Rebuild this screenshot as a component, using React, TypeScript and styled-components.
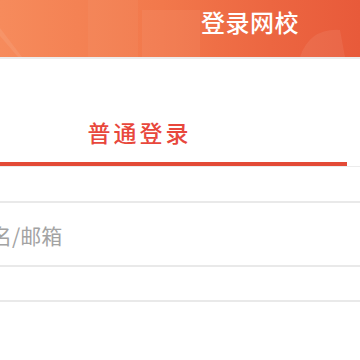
import styled, { createGlobalStyle } from "styled-components";

const GlobalStyle = createGlobalStyle`
  html, body {
    margin: 0;
    padding: 0;
    background: #ffffff;
    overflow: hidden;
  }
  body {
    font-family: "Noto Sans CJK SC", "Noto Sans", sans-serif;
  }
`;

const Page = styled.div`
  width: 360px;
  height: 360px;
  overflow: hidden;
  background: #ffffff;
`;

const Header = styled.header`
  position: relative;
  height: 57px;
  display: flex;
  align-items: center;
  justify-content: flex-end;
  padding-right: 61px;
  background: linear-gradient(90deg, #f68b5c 0%, #f2784b 45%, #ec6641 75%, #e85a3a 100%);
  border-bottom: 2px solid #ececec;
  overflow: hidden;
`;

const Decor = styled.svg`
  position: absolute;
  inset: 0;
  pointer-events: none;
`;

const Title = styled.h1`
  position: relative;
  margin: 0;
  color: #ffffff;
  font-size: 24px;
  font-weight: 500;
  line-height: 1;
  letter-spacing: 0.5px;
  padding-bottom: 14px;
`;

const TabBar = styled.div`
  display: flex;
  margin-left: -68px;
  margin-top: 50px;
  border-bottom: 1px solid #ececec;
`;

const Tab = styled.div<{ $active?: boolean }>`
  width: ${(p) => (p.$active ? "415px" : "120px")};
  flex-shrink: 0;
  height: 57px;
  display: flex;
  align-items: flex-start;
  justify-content: center;
  font-size: 23px;
  font-weight: 500;
  letter-spacing: 3px;
  line-height: 1;
  padding-top: 12px;
  box-sizing: border-box;
  color: ${(p) => (p.$active ? "#e8473c" : "#666666")};
  border-bottom: 4px solid ${(p) => (p.$active ? "#e34a36" : "transparent")};
`;

const Field = styled.div<{ $h: number }>`
  height: ${(p) => p.$h}px;
  display: flex;
  align-items: center;
  border-bottom: 2px solid #e9e9e9;
  box-sizing: border-box;
`;

const Placeholder = styled.span`
  margin-left: -51px;
  color: #a3a3a3;
  font-size: 21px;
  line-height: 1;
  white-space: nowrap;
  padding-top: 3px;
`;

export default function App() {
  return (
    <Page>
      <GlobalStyle />
      <Header>
        <Decor width="360" height="57" viewBox="0 0 360 57">
          <path d="M0 28 L22 57 L18 57 L0 36 Z" fill="#ffffff" opacity="0.08" />
          <rect x="88" y="0" width="50" height="57" fill="#ffffff" opacity="0.04" />
          <rect x="142" y="10" width="58" height="47" fill="#ffffff" opacity="0.05" />
          <path d="M300 57 Q310 28 340 30 L345 57 Z" fill="#ffffff" opacity="0.07" />
        </Decor>
        <Title>登录网校</Title>
      </Header>
      <TabBar>
        <Tab $active>普通登录</Tab>
      </TabBar>
      <Field $h={36} />
      <Field $h={64}>
        <Placeholder>用户名/邮箱</Placeholder>
      </Field>
      <Field $h={35} />
    </Page>
  );
}
